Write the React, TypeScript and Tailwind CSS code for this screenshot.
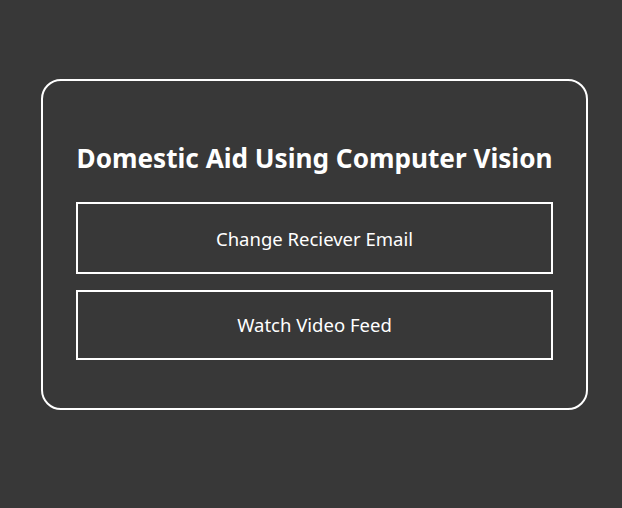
import React from "react";

const App: React.FC = () => {
  return (
    <div
      className="min-h-screen w-full bg-[#383838] pt-[79px] pl-[41px]"
      style={{ fontFamily: '"Noto Sans", "Open Sans", sans-serif' }}
    >
      {/* Card */}
      <div className="flex h-[331px] w-[547px] flex-col rounded-[20px] border-2 border-white px-[33px] pt-[61px]">
        <h1 className="-mx-4 whitespace-nowrap text-center text-[26.15px] font-bold leading-8 text-white">
          Domestic Aid Using Computer Vision
        </h1>

        <div className="mt-[28px] flex flex-col gap-[16px]">
          <button
            type="button"
            className="flex h-[72px] w-full items-center justify-center border-2 border-white pt-px text-[18.5px] text-white"
          >
            Change Reciever Email
          </button>
          <button
            type="button"
            className="flex h-[70px] w-full items-center justify-center border-2 border-white text-[18.5px] text-white"
          >
            Watch Video Feed
          </button>
        </div>
      </div>
    </div>
  );
};

export default App;
